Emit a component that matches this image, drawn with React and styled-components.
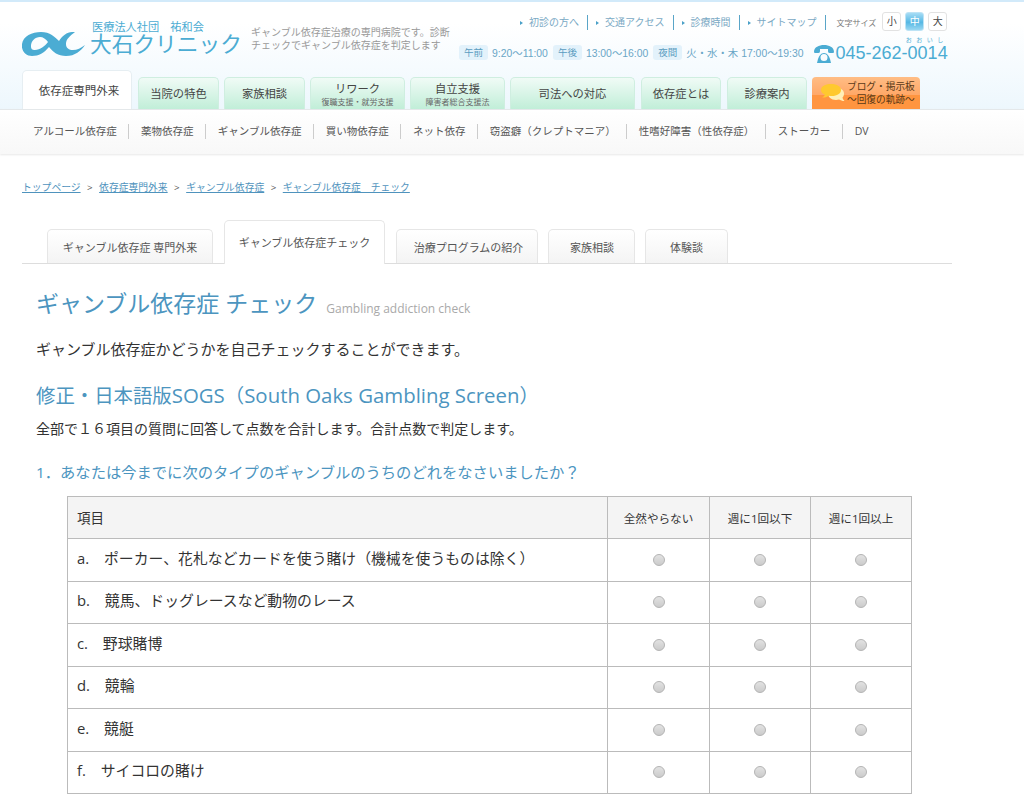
import React from "react";
import styled, { createGlobalStyle } from "styled-components";

const Global = createGlobalStyle`
  html, body { margin: 0; padding: 0; background: #fff; overflow: hidden; }
  body { font-family: "Open Sans", "Noto Sans CJK JP", sans-serif; color: #333; }
  #root { height: 794px; overflow: hidden; }
  * { box-sizing: border-box; }
`;

const Header = styled.header`
  height: 109px;
  border-top: 2px solid #d2eafa;
  background: linear-gradient(#fff 20%, #edf7fd);
  display: flex;
  flex-direction: column;
`;
const TopArea = styled.div`
  height: 68px;
  display: flex;
  padding-left: 22px;
`;
const LogoBlock = styled.a`
  width: 229px;
  flex: none;
  display: flex;
  padding-top: 18px;
  align-items: flex-start;
`;
const LogoText = styled.div`
  margin-left: 4px;
  display: flex;
  flex-direction: column;
  color: #4bacd3;
`;
const Corp = styled.span`
  font-size: 11.2px;
  line-height: 13px;
  padding-left: 2px;
  white-space: pre;
`;
const ClinicName = styled.span`
  font-size: 21.7px;
  line-height: 22px;
  white-space: nowrap;
`;
const Tagline = styled.p`
  margin: 24px 0 0;
  width: 208px;
  flex: none;
  font-size: 10px;
  line-height: 13px;
  color: #999;
`;
const RightBlock = styled.div`
  flex: 1;
  display: flex;
  flex-direction: column;
  padding-top: 10px;
`;
const UtilRow = styled.div`
  display: flex;
  align-items: center;
  height: 20px;
  padding-left: 53px;
`;
const UtilLink = styled.a`
  font-size: 10px;
  line-height: 15px;
  color: #7aa9c4;
  padding: 0 8px;
  height: 15px;
  border-right: 1px solid #5aa5c8;
  white-space: nowrap;
  &::before {
    content: "";
    display: inline-block;
    border-left: 3px solid #4aa0c8;
    border-top: 2px solid transparent;
    border-bottom: 2px solid transparent;
    margin-right: 6px;
    vertical-align: 1px;
  }
`;
const SizeLabel = styled.span`
  font-size: 8px;
  color: #777;
  margin-left: 11px;
  margin-right: 6px;
  white-space: nowrap;
`;
const SizeBtn = styled.button`
  width: 19px;
  height: 19px;
  padding: 0;
  margin: 0 4px 2px 0;
  border: 1px solid ${(p) => (p.$on ? "#bde3f5" : "#e2e2e2")};
  border-radius: 3px;
  font-family: inherit;
  font-size: 10px;
  line-height: 17px;
  color: ${(p) => (p.$on ? "#fff" : "#444")};
  background: ${(p) => (p.$on ? "linear-gradient(#a6dcf5, #56b8e4 55%, #9ad8f2)" : "#fff")};
`;
const HoursRow = styled.div`
  display: flex;
  align-items: center;
  margin-top: 7px;
  height: 26px;
`;
const HourBadge = styled.span`
  font-size: 9.5px;
  line-height: 15px;
  padding: 0 5px;
  background: #e3f2fb;
  border-radius: 3px;
  color: #5a9cc0;
  margin-right: 4px;
  white-space: nowrap;
`;
const HourText = styled.span`
  font-family: "Liberation Sans", "Noto Sans CJK JP", sans-serif;
  font-size: 10.4px;
  color: #6aa6c6;
  margin-right: 5px;
  white-space: nowrap;
`;
const Phone = styled.div`
  position: relative;
  display: flex;
  align-items: center;
  margin-left: 4px;
  margin-top: 3px;
  color: #4bacd3;
  font-family: "Liberation Sans", sans-serif;
  font-size: 18px;
  white-space: nowrap;
`;
const Ruby = styled.span`
  position: absolute;
  top: -7px;
  right: 0;
  font-size: 6px;
  letter-spacing: 4.5px;
  font-family: "Noto Sans CJK JP", sans-serif;
  line-height: 8px;
`;

const MainNav = styled.nav`
  flex: 1;
  display: flex;
  align-items: flex-end;
  padding-left: 22px;
`;
const NavTab = styled.a`
  width: ${(p) => p.$w}px;
  margin-right: ${(p) => p.$mr ?? 5}px;
  height: ${(p) => (p.$active ? 39 : 32)}px;
  flex: none;
  display: flex;
  flex-direction: column;
  align-items: center;
  justify-content: center;
  padding-left: ${(p) => (p.$active ? 4 : 0)}px;
  border: 1px solid ${(p) => (p.$active ? "#e6eef2" : "#cfeee0")};
  border-bottom: none;
  border-radius: 5px 5px 0 0;
  background: ${(p) => (p.$active ? "#fff" : "linear-gradient(#f0fbf6, #c1eed8)")};
  color: #444;
  font-size: ${(p) => (p.$active ? 11.5 : 11.3)}px;
  line-height: 15px;
  white-space: nowrap;
`;
const NavSub = styled.small`
  font-size: 8px;
  line-height: 11px;
  color: #666;
`;
const BlogTab = styled.a`
  width: 108px;
  height: 32px;
  flex: none;
  display: flex;
  align-items: center;
  padding-left: 9px;
  border-radius: 4px 4px 0 0;
  background: linear-gradient(#ffbd85, #ffa868 55%, #ff9540 55%);
  color: #5a3a18;
`;
const BlogText = styled.span`
  display: flex;
  flex-direction: column;
  align-items: center;
  margin-left: 2px;
  font-size: 9.7px;
  line-height: 13px;
  white-space: nowrap;
`;

const SubNav = styled.nav`
  height: 45px;
  display: flex;
  align-items: center;
  padding: 0 0 1px 21px;
  background: linear-gradient(#fff, #f8f8f8);
  border-top: 1px solid #e4e8ea;
  box-shadow: 0 1px 2px #e8e8e8;
`;
const SubItem = styled.a`
  font-size: 10.5px;
  line-height: 15px;
  color: #555;
  padding: 0 ${(p) => p.$pr ?? 11.3}px 0 12px;
  border-right: ${(p) => (p.$last ? "none" : "1px solid #ccc")};
  white-space: nowrap;
`;

const Main = styled.main`
  padding: 27px 72px 0 22px;
`;
const Crumbs = styled.div`
  font-size: 9.8px;
  line-height: 14px;
  display: flex;
  height: 14px;
  color: #555;
  white-space: pre;
`;
const Crumb = styled.a`
  color: #4f93bd;
  text-decoration: underline;
`;
const CrumbSep = styled.span`
  width: 18.5px;
  text-align: center;
`;
const Tabs = styled.div`
  margin-top: 25px;
  height: 44px;
  display: flex;
  align-items: flex-end;
  padding-left: 25px;
  border-bottom: 1px solid #ddd;
`;
const Tab = styled.a`
  width: ${(p) => p.$w}px;
  height: ${(p) => (p.$active ? 44 : 34)}px;
  margin-right: ${(p) => p.$mr}px;
  margin-bottom: ${(p) => (p.$active ? -1 : 0)}px;
  flex: none;
  display: flex;
  align-items: center;
  justify-content: center;
  padding-bottom: ${(p) => (p.$active ? 1 : 0)}px;
  padding-left: ${(p) => p.$pl ?? 0}px;
  font-size: 11px;
  color: #555;
  white-space: nowrap;
  border: 1px solid #e6e6e6;
  border-bottom: none;
  border-radius: 5px 5px 0 0;
  background: ${(p) => (p.$active ? "#fff" : "linear-gradient(#fff, #f4f4f4)")};
`;
const Content = styled.section`
  padding: 0 0 0 14px;
`;
const Title = styled.h1`
  margin: 20px 0 0;
  font-size: 23px;
  line-height: 38px;
  font-weight: 400;
  color: #4c95bf;
  white-space: nowrap;
`;
const TitleSub = styled.small`
  font-size: 12px;
  color: #a9a9a9;
  margin-left: 9px;
  vertical-align: -1px;
`;
const Lead = styled.p`
  margin: 9px 0 0;
  font-size: 15px;
  line-height: 24px;
  color: #333;
`;
const Heading = styled.h2`
  margin: 19px 0 0;
  font-size: 19.4px;
  line-height: 30px;
  font-weight: 400;
  color: #4c95bf;
`;
const HeadingLatin = styled.span`
  font-size: 20.4px;
`;
const Note = styled.p`
  margin: 7px 0 0;
  font-size: 14px;
  line-height: 22px;
`;
const Question = styled.h3`
  margin: 20px 0 0;
  font-size: 15.3px;
  line-height: 24px;
  font-weight: 400;
  color: #4c95bf;
`;
const Table = styled.table`
  margin: 12px 0 0 31px;
  width: 844px;
  table-layout: fixed;
  border-collapse: collapse;
`;
const Th = styled.th`
  height: 42px;
  border: 1px solid #bbb;
  background: #f4f4f4;
  font-weight: 400;
  font-size: ${(p) => (p.$first ? 13.5 : 11.6)}px;
  text-align: ${(p) => (p.$first ? "left" : "center")};
  padding: 0 0 ${(p) => (p.$first ? 2 : 0)}px ${(p) => (p.$first ? 9 : 0)}px;
  color: #333;
`;
const Td = styled.td`
  height: 42.5px;
  border: 1px solid #bbb;
  font-size: 14.85px;
  padding: 0 0 5px 9px;
  color: #333;
  white-space: pre;
`;
const RadioCell = styled.td`
  border: 1px solid #bbb;
  text-align: center;
  padding: 0;
`;
const Radio = styled.input.attrs({ type: "radio" })`
  appearance: none;
  display: block;
  width: 12px;
  height: 12px;
  margin: 0 auto;
  border-radius: 50%;
  border: 1px solid #b5b5b5;
  background: linear-gradient(#e2e2e2, #cbcbcb);
`;

const LogoMark = () => (
  <svg width="64" height="24" viewBox="0 0 64 24" style={{ marginTop: 12, flex: "none" }}>
    <path
      fill="#4bacd3"
      fillRule="evenodd"
      d="M0 12C1 4 10 0 19 0c9 0 14 5 18 9 3-5 8-9 13-9h3c-5 4-9 7-9 12 0 4 3 6 7 6 4 0 8-2 12-5-4 6-10 11-19 11-8 0-13-4-17-9-5 6-10 9-17 9C4 24-1 19 0 12Zm13 6c5 0 10-4 13-8-2-3-5-5-8-5-5 0-9 4-9 9 0 3 1 4 4 4Z"
    />
  </svg>
);

const PhoneIcon = () => (
  <svg width="22" height="18" viewBox="0 0 22 18" style={{ marginRight: 1 }}>
    <path
      fill="#4bacd3"
      fillRule="evenodd"
      d="M1 7C1 2 6 0 11 0s10 2 10 7c0 1-1 1-3 1s-3 0-3-2V4H7v2c0 2-1 2-3 2S1 8 1 7Zm3 11 1-4c1-3 3-6 6-6s5 3 6 6l1 4H4Zm7-2a3.500 3.500 0 1 0 0-7 3.500 3.500 0 0 0 0 7Z"
    />
  </svg>
);

const BlogIcon = () => (
  <svg width="24" height="18" viewBox="0 0 24 18" style={{ flex: "none" }}>
    <path fill="#fff0b8" d="M15 4c5 0 8 2.200 8 5.500 0 1.600-.5 3-1.500 4 .3 1.500 1 2.800 2 3.500-2.200 0-4-.6-5.500-1.500-1 .3-2 .5-3 .5-5 0-8-3-8-6.500S10 4 15 4Z" />
    <path fill="#ffc92e" d="M10 0c6 0 10 2.500 10 6s-4 6-9 6c-1 0-2 0-3-.3C6 13 4 13.500 1 13.500c1.500-.7 2.500-1.800 2.800-3C1.500 9.500 0 8 0 6c0-3.500 4-6 10-6Z" />
  </svg>
);

const nav = [
  { w: 81, t: "当院の特色" },
  { w: 81, t: "家族相談" },
  { w: 95, t: "リワーク", s: "復職支援・就労支援" },
  { w: 95, t: "自立支援", s: "障害者総合支援法" },
  { w: 125, t: "司法への対応", mr: 6 },
  { w: 80, t: "依存症とは", mr: 6 },
  { w: 80, t: "診療案内" },
];
const subs = [
  ["アルコール依存症"],
  ["薬物依存症"],
  ["ギャンブル依存症"],
  ["買い物依存症"],
  ["ネット依存"],
  ["窃盗癖（クレプトマニア）", 10],
  ["性嗜好障害（性依存症）", 10.5],
  ["ストーカー"],
];
const rows = [
  "a.　ポーカー、花札などカードを使う賭け（機械を使うものは除く）",
  "b.　競馬、ドッグレースなど動物のレース",
  "c.　野球賭博",
  "d.　競輪",
  "e.　競艇",
  "f.　サイコロの賭け",
];
const crumbs = ["トップページ", "依存症専門外来", "ギャンブル依存症", "ギャンブル依存症　チェック"];

export default function App() {
  return (
    <>
      <Global />
      <Header>
        <TopArea>
          <LogoBlock>
            <LogoMark />
            <LogoText>
              <Corp>医療法人社団　祐和会</Corp>
              <ClinicName>大石クリニック</ClinicName>
            </LogoText>
          </LogoBlock>
          <Tagline>
            ギャンブル依存症治療の専門病院です。診断
            <br />
            チェックでギャンブル依存症を判定します
          </Tagline>
          <RightBlock>
            <UtilRow>
              <UtilLink>初診の方へ</UtilLink>
              <UtilLink>交通アクセス</UtilLink>
              <UtilLink>診療時間</UtilLink>
              <UtilLink>サイトマップ</UtilLink>
              <SizeLabel>文字サイズ</SizeLabel>
              <SizeBtn>小</SizeBtn>
              <SizeBtn $on>中</SizeBtn>
              <SizeBtn>大</SizeBtn>
            </UtilRow>
            <HoursRow>
              <HourBadge>午前</HourBadge>
              <HourText>9:20〜11:00</HourText>
              <HourBadge>午後</HourBadge>
              <HourText>13:00〜16:00</HourText>
              <HourBadge>夜間</HourBadge>
              <HourText>火・水・木 17:00〜19:30</HourText>
              <Phone>
                <Ruby>おおいし</Ruby>
                <PhoneIcon />
                045-262-0014
              </Phone>
            </HoursRow>
          </RightBlock>
        </TopArea>
        <MainNav>
          <NavTab $active $w={110} $mr={6}>依存症専門外来</NavTab>
          {nav.map((n) => (
            <NavTab key={n.t} $w={n.w} $mr={n.mr}>
              {n.t}
              {n.s && <NavSub>{n.s}</NavSub>}
            </NavTab>
          ))}
          <BlogTab>
            <BlogIcon />
            <BlogText>
              ブログ・掲示板
              <span>〜回復の軌跡〜</span>
            </BlogText>
          </BlogTab>
        </MainNav>
      </Header>
      <SubNav>
        {subs.map(([t, pr]) => (
          <SubItem key={t} $pr={pr}>{t}</SubItem>
        ))}
        <SubItem $last>DV</SubItem>
      </SubNav>
      <Main>
        <Crumbs>
          {crumbs.map((c, i) => (
            <React.Fragment key={c}>
              {i > 0 && <CrumbSep>&gt;</CrumbSep>}
              <Crumb>{c}</Crumb>
            </React.Fragment>
          ))}
        </Crumbs>
        <Tabs>
          <Tab $w={166} $mr={11}>ギャンブル依存症 専門外来</Tab>
          <Tab $active $w={161} $mr={11}>ギャンブル依存症チェック</Tab>
          <Tab $w={142} $mr={10} $pl={3}>治療プログラムの紹介</Tab>
          <Tab $w={87} $mr={10} $pl={1}>家族相談</Tab>
          <Tab $w={83} $mr={0}>体験談</Tab>
        </Tabs>
        <Content>
          <Title>
            ギャンブル依存症 チェック<TitleSub>Gambling addiction check</TitleSub>
          </Title>
          <Lead>ギャンブル依存症かどうかを自己チェックすることができます。</Lead>
          <Heading>
            修正・日本語版<HeadingLatin>SOGS</HeadingLatin>（<HeadingLatin>South Oaks Gambling Screen</HeadingLatin>）
          </Heading>
          <Note>全部で１６項目の質問に回答して点数を合計します。合計点数で判定します。</Note>
          <Question>1．あなたは今までに次のタイプのギャンブルのうちのどれをなさいましたか？</Question>
          <Table>
            <colgroup>
              <col style={{ width: 540 }} />
              <col style={{ width: 102 }} />
              <col style={{ width: 101 }} />
              <col style={{ width: 101 }} />
            </colgroup>
            <thead>
              <tr>
                <Th $first>項目</Th>
                <Th>全然やらない</Th>
                <Th>週に1回以下</Th>
                <Th>週に1回以上</Th>
              </tr>
            </thead>
            <tbody>
              {rows.map((r) => (
                <tr key={r}>
                  <Td>{r}</Td>
                  <RadioCell><Radio name={r} /></RadioCell>
                  <RadioCell><Radio name={r} /></RadioCell>
                  <RadioCell><Radio name={r} /></RadioCell>
                </tr>
              ))}
            </tbody>
          </Table>
        </Content>
      </Main>
    </>
  );
}
